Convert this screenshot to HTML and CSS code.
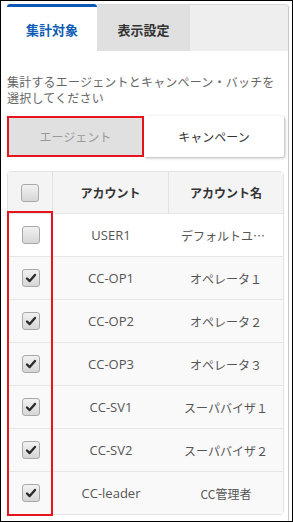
FILE: index.html
```html
<!DOCTYPE html>
<html>
<head>
    <title>集計対象</title>
    <link rel="stylesheet" href="styles.css">
</head>
<body>
    <div class="frame">
        <div class="panel">
            <div class="tabs">
                <div class="tab active">集計対象</div>
                <div class="tab">表示設定</div>
                <div class="tab-fill"></div>
            </div>

            <div class="content">
                <p class="desc">集計するエージェントとキャンペーン・バッチを選択してください</p>

                <div class="toggle">
                    <div class="toggle-btn selected">エージェント</div>
                    <div class="toggle-btn">キャンペーン</div>
                </div>

                <div class="table-wrap">
                    <table class="agents">
                        <thead>
                            <tr>
                                <th class="col-check"><span class="checkbox"></span></th>
                                <th class="col-account">アカウント</th>
                                <th class="col-name">アカウント名</th>
                            </tr>
                        </thead>
                        <tbody>
                            <tr>
                                <td><span class="checkbox"></span></td>
                                <td class="account">USER1</td>
                                <td class="name">デフォルトユーザー</td>
                            </tr>
                            <tr class="checked">
                                <td><span class="checkbox"><svg viewBox="0 0 18 18"><path d="M4.5 9.5 L7.5 12.5 L13.5 5.5" /></svg></span></td>
                                <td class="account">CC-OP1</td>
                                <td class="name">オペレータ１</td>
                            </tr>
                            <tr class="checked">
                                <td><span class="checkbox"><svg viewBox="0 0 18 18"><path d="M4.5 9.5 L7.5 12.5 L13.5 5.5" /></svg></span></td>
                                <td class="account">CC-OP2</td>
                                <td class="name">オペレータ２</td>
                            </tr>
                            <tr class="checked">
                                <td><span class="checkbox"><svg viewBox="0 0 18 18"><path d="M4.5 9.5 L7.5 12.5 L13.5 5.5" /></svg></span></td>
                                <td class="account">CC-OP3</td>
                                <td class="name">オペレータ３</td>
                            </tr>
                            <tr class="checked">
                                <td><span class="checkbox"><svg viewBox="0 0 18 18"><path d="M4.5 9.5 L7.5 12.5 L13.5 5.5" /></svg></span></td>
                                <td class="account">CC-SV1</td>
                                <td class="name">スーパバイザ１</td>
                            </tr>
                            <tr class="checked">
                                <td><span class="checkbox"><svg viewBox="0 0 18 18"><path d="M4.5 9.5 L7.5 12.5 L13.5 5.5" /></svg></span></td>
                                <td class="account">CC-SV2</td>
                                <td class="name">スーパバイザ２</td>
                            </tr>
                            <tr class="checked last">
                                <td><span class="checkbox"><svg viewBox="0 0 18 18"><path d="M4.5 9.5 L7.5 12.5 L13.5 5.5" /></svg></span></td>
                                <td class="account">CC-leader</td>
                                <td class="name">CC管理者</td>
                            </tr>
                        </tbody>
                    </table>
                    <div class="highlight"></div>
                </div>
            </div>
        </div>
    </div>
</body>
</html>
```

FILE: styles.css
```css
body {
    margin: 0;
    font-family: "Open Sans", "Noto Sans CJK JP", sans-serif;
    font-size: 12px;
    color: #555;
}
.frame {
    width: 293px;
    height: 522px;
    box-sizing: border-box;
    border: 1px solid #000;
    padding: 3px 3px 0 1px;
    overflow: hidden;
}
.panel {
    height: 100%;
    border-right: 1px solid #c8c8c8;
    border-top-right-radius: 4px;
    background: #fff;
}
.tabs {
    display: flex;
    height: 47px;
    padding-left: 5px;
}
.tab {
    width: 93px;
    display: flex;
    align-items: center;
    justify-content: center;
    font-family: "Noto Sans CJK JP", sans-serif;
    font-size: 13px;
    font-weight: bold;
    color: #333;
    background: #e0e0e0;
    border-top: 1px solid #d8d8d8;
    box-sizing: border-box;
    padding-top: 2px;
}
.tab.active {
    width: 90px;
    color: #0d5cb6;
    background: #fff;
    border-top: 3px solid #0b58b5;
    border-radius: 3px 3px 0 0;
    padding-top: 0;
}
.tab-fill {
    flex: 1;
    background: #eee;
    border-top: 1px solid #d8d8d8;
    border-top-right-radius: 4px;
}
.content {
    padding: 0 4px 0 5px;
}
.desc {
    margin: 23px 0 0;
    line-height: 16px;
    font-family: "Noto Sans CJK JP", sans-serif;
    letter-spacing: 0.2px;
    color: #666;
}
.toggle {
    display: flex;
    margin-top: 10px;
    height: 41px;
}
.toggle-btn {
    flex: 1;
    display: flex;
    align-items: center;
    justify-content: center;
    font-family: "Noto Sans CJK JP", sans-serif;
    color: #333;
    background: #fff;
    box-shadow: 1px 1px 3px rgba(0, 0, 0, 0.3);
    border-radius: 0 2px 2px 0;
}
.toggle-btn.selected {
    flex: none;
    width: 137px;
    box-sizing: border-box;
    border: 2px solid #e8141b;
    background: #e0e0e0;
    color: #999;
    box-shadow: none;
    border-radius: 0;
}
.table-wrap {
    position: relative;
    margin-top: 14px;
    width: 277px;
}
.agents {
    width: 100%;
    border-collapse: separate;
    border-spacing: 0;
    border: 1px solid #e2e2e2;
    border-radius: 4px;
    table-layout: fixed;
}
.agents th, .agents td {
    padding: 0;
    text-align: center;
    border-bottom: 1px solid #e6e6e6;
}
.agents th {
    height: 41px;
    background: #f4f4f4;
    color: #333;
    font-family: "Noto Sans CJK JP", sans-serif;
    font-weight: bold;
    border-right: 1px solid #e2e2e2;
}
.agents th:last-child {
    border-right: none;
}
.agents td {
    height: 42px;
}
.agents td.account {
    font-size: 13px;
}
.agents tr.last td {
    border-bottom: none;
}
.agents tr.checked td {
    background: #f9f9f9;
}
.col-check {
    width: 44px;
}
.col-account {
    width: 115px;
}
.agents td.name {
    padding: 0 12px;
    white-space: nowrap;
    overflow: hidden;
    text-overflow: ellipsis;
    font-family: "Noto Sans CJK JP", sans-serif;
}
.checkbox {
    display: inline-block;
    width: 18px;
    height: 18px;
    box-sizing: border-box;
    border: 1px solid #a8a8a8;
    border-radius: 3px;
    background: linear-gradient(#f2f2f2, #d6d6d6);
    vertical-align: middle;
}
.checkbox svg {
    display: block;
    width: 16px;
    height: 16px;
}
.checkbox path {
    fill: none;
    stroke: #2a2a2a;
    stroke-width: 2.6;
    stroke-linecap: round;
    stroke-linejoin: round;
}
.highlight {
    position: absolute;
    left: 0;
    top: 40px;
    width: 46px;
    bottom: -1px;
    box-sizing: border-box;
    border: 2px solid #e8141b;
    pointer-events: none;
}
```
